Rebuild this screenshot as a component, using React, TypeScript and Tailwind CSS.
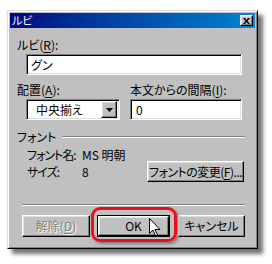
import React from 'react';

const raised =
  'bg-[#c0c0c0] border border-t-white border-l-white border-r-black border-b-black shadow-[inset_-1px_-1px_#808080,inset_1px_1px_#dfdfdf]';
const sunken =
  'bg-white border border-t-[#808080] border-l-[#808080] border-r-white border-b-white shadow-[inset_1px_1px_#000,inset_-1px_-1px_#dfdfdf]';

const Mn = ({ k }: { k: string }) => (
  <span>
    (<span className="underline underline-offset-2">{k}</span>)
  </span>
);

const Etched = ({ className = '' }: { className?: string }) => (
  <div className={`h-[2px] border-t border-t-[#808080] border-b border-b-white ${className}`} />
);

export default function App() {
  return (
    <div className="w-[272px] h-[264px] bg-white pl-[7px] pt-[10px] text-[12px] leading-[14px] text-black whitespace-nowrap [font-feature-settings:'palt'] [font-family:'Noto_Sans_CJK_JP',sans-serif]">
      <div className="relative w-[251px] h-[239px] bg-[#c0c0c0] p-[2px] flex flex-col border border-t-[#dfdfdf] border-l-[#dfdfdf] border-r-black border-b-black shadow-[inset_1px_1px_#fff,inset_-1px_-1px_#808080,5px_5px_4px_rgba(0,0,0,0.55)]">
        {/* title bar */}
        <div className="h-[15px] flex items-center justify-between pl-[2px] pr-[2px] bg-gradient-to-r from-[#000080] to-[#1084d0]">
          <span className="text-white text-[11px] leading-[13px]">ルビ</span>
          <div className={`w-[13px] h-[11px] flex items-center justify-center ${raised}`}>
            <svg width="7" height="6" viewBox="0 0 7 6">
              <path d="M0 0h2l1.5 2L5 0h2L4.5 3 7 6H5L3.5 4 2 6H0l2.5-3z" fill="#000" />
            </svg>
          </div>
        </div>

        {/* body */}
        <div className="flex flex-col pl-[7px] pr-[10px]">
          <div className="mt-[10px] h-[14px]">
            ルビ<Mn k="R" />:
          </div>
          <div className={`mt-[2px] ml-[9px] w-[216px] h-[21px] flex items-center pl-[4px] ${sunken}`}>グン</div>

          <div className="mt-[8px] flex">
            <div className="w-[113px] flex flex-col">
              <div className="h-[14px]">
                配置<Mn k="A" />:
              </div>
              <div className={`mt-[2px] ml-[9px] w-[94px] h-[21px] flex items-center justify-between pl-[9px] pr-[2px] ${sunken}`}>
                <span>中央揃え</span>
                <div className={`w-[16px] h-[17px] flex items-center justify-center ${raised}`}>
                  <svg width="7" height="4" viewBox="0 0 7 4">
                    <path d="M0 0h7L3.5 4z" fill="#000" />
                  </svg>
                </div>
              </div>
            </div>
            <div className="flex flex-col">
              <div className="h-[14px]">
                本文からの間隔<Mn k="I" />:
              </div>
              <div className={`mt-[2px] w-[112px] h-[21px] flex items-center pl-[5px] ${sunken}`}>0</div>
            </div>
          </div>

          <div className="mt-[10px] flex items-center h-[14px]">
            <span>フォント</span>
            <Etched className="ml-[6px] w-[187px]" />
          </div>
          <div className="flex justify-between">
            <div className="ml-[10px] flex flex-col">
              <div className="mt-[4px] flex h-[14px]">
                <span className="w-[55px] tracking-[-1px]">フォント名:</span>
                <span>MS 明朝</span>
              </div>
              <div className="mt-[3px] flex h-[14px]">
                <span className="w-[55px] tracking-[-1px]">サイズ:</span>
                <span>8</span>
              </div>
            </div>
            <div className={`mt-[17px] mr-[1px] w-[97px] h-[21px] flex items-center justify-center tracking-[-0.5px] ${raised}`}>
              フォントの変更<Mn k="F" />...
            </div>
          </div>

          <Etched className="mt-[22px] ml-[5px] w-[223px]" />

          <div className="mt-[9px] ml-[5px] flex">
            <div className={`w-[68px] h-[22px] flex items-center justify-center text-[#808080] [text-shadow:1px_1px_#fff] ${raised}`}>
              解除<Mn k="D" />
            </div>
            <div className="ml-[7px] w-[73px] h-[22px] border border-black">
              <div className={`w-full h-full flex items-center justify-center ${raised}`}>OK</div>
            </div>
            <div className={`ml-[8px] w-[67px] h-[22px] flex items-center justify-center ${raised}`}>キャンセル</div>
          </div>
        </div>

        {/* highlight ring around OK */}
        <div className="absolute left-[83px] top-[196px] w-[86px] h-[35px] rounded-[9px] border-[3px] border-[#e8101a] shadow-[2px_2px_3px_rgba(0,0,0,0.35)]" />
        {/* mouse pointer */}
        <svg className="absolute left-[141px] top-[207px]" width="12" height="19" viewBox="0 0 12 19">
          <path d="M0.5 0.5v15l3.5-3.5 2.5 6 2-1-2.5-5.5h5z" fill="#fff" stroke="#000" strokeWidth="1" strokeLinejoin="miter" />
        </svg>
      </div>
    </div>
  );
}
